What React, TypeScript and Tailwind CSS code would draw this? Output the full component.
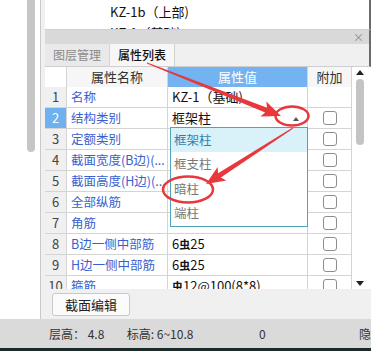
import React from "react";

type Row = { n: number; name: string; value: string; cb: boolean };

const rows: Row[] = [
  { n: 1, name: "名称", value: "KZ-1（基础)", cb: false },
  { n: 2, name: "结构类别", value: "框架柱", cb: true },
  { n: 3, name: "定额类别", value: "", cb: true },
  { n: 4, name: "截面宽度(B边)(...", value: "", cb: true },
  { n: 5, name: "截面高度(H边)(...", value: "", cb: true },
  { n: 6, name: "全部纵筋", value: "", cb: true },
  { n: 7, name: "角筋", value: "", cb: true },
  { n: 8, name: "B边一侧中部筋", value: "6|25", cb: true },
  { n: 9, name: "H边一侧中部筋", value: "6|25", cb: true },
  { n: 10, name: "箍筋", value: " |12@100(8*8)", cb: true },
];

function Val({ v }: { v: string }) {
  const parts = v.split("|");
  if (parts.length === 1) return <>{v}</>;
  return (
    <>
      {parts[0]}
      <span className="text-[11px] font-bold">虫</span>
      {parts[1]}
    </>
  );
}

function arrow(t: [number, number], p: [number, number], hl = 16, hw = 8, sw = 2.6, tw = 0.5) {
  const dx = p[0] - t[0];
  const dy = p[1] - t[1];
  const L = Math.hypot(dx, dy);
  const ux = dx / L;
  const uy = dy / L;
  const nx = -uy;
  const ny = ux;
  const bx = p[0] - hl * ux;
  const by = p[1] - hl * uy;
  const pts = [
    [t[0] + tw * nx, t[1] + tw * ny],
    [bx + sw * nx, by + sw * ny],
    [bx + hw * nx - 3 * ux, by + hw * ny - 3 * uy],
    [p[0], p[1]],
    [bx - hw * nx - 3 * ux, by - hw * ny - 3 * uy],
    [bx - sw * nx, by - sw * ny],
    [t[0] - tw * nx, t[1] - tw * ny],
  ];
  return pts.map((q) => q[0].toFixed(2) + "," + q[1].toFixed(2)).join(" ");
}

export default function App() {
  const font = { fontFamily: '"Noto Sans CJK SC", "Noto Sans", sans-serif' };
  return (
    <div
      className="relative w-[371px] h-[351px] overflow-hidden bg-white flex flex-col text-[12px] text-[#222]"
      style={font}
    >
      <div className="flex h-[319px]">
        {/* left area with scrollbar thumb */}
        <div className="w-[40px] bg-white pl-[27px]">
          <div className="w-[8px] h-[152px] bg-[#c6c6c6] rounded-b-full" />
        </div>
        {/* panel */}
        <div className="flex-1 flex flex-col border-l border-[#c9c9c9] bg-[#f0f0f0] pl-[4px]">
          {/* top white list */}
          <div className="h-[30px] bg-white border-b border-[#cfcfcf] overflow-hidden pl-[65px] pt-[1px] leading-[21px] text-[13px] text-[#111] border-r-2 border-r-[#6b6b6b]">
            <div>KZ-1b（上部)</div>
            <div>KZ-1（基础)</div>
          </div>
          {/* header bar */}
          <div className="h-[14px] bg-[#d9d9d9] flex items-center justify-end pr-[5px] text-[11px] leading-none text-[#8a8a8a] border-r-2 border-r-[#6b6b6b]">
            ×
          </div>
          {/* tabs */}
          <div className="h-[23px] flex border-b border-[#cfcfcf] bg-[#f0f0f0] border-r-2 border-r-[#6b6b6b]">
            <div className="w-[65px] flex items-center justify-center bg-[#e9e9e9] text-[#8a8a8a] text-[12px] border-r border-[#d6d6d6]">
              图层管理
            </div>
            <div className="w-[65px] flex items-center justify-center bg-[#f6f6f6] text-[#111] font-medium text-[12px] border-r border-[#d0d0d0]">
              属性列表
            </div>
          </div>
          {/* table */}
          <div className="h-[222px] flex overflow-hidden bg-white">
            <div className="w-[307px] flex flex-col">
              <div className="h-[20px] shrink-0 grid grid-cols-[22px_101px_140px_44px] border-b border-[#d4d4d4]">
                <div className="bg-white border-r border-[#d4d4d4]" />
                <div className="bg-[#f6f6f6] border-r border-[#d4d4d4] flex items-center justify-center text-[#333] text-[13px]">
                  属性名称
                </div>
                <div className="bg-[#73b3f1] border-r border-[#d4d4d4] flex items-center justify-center text-white text-[13px]">
                  属性值
                </div>
                <div className="bg-[#f6f6f6] border-r border-[#d4d4d4] flex items-center justify-center text-[#333] text-[13px]">
                  附加
                </div>
              </div>
              {rows.map((r) => (
                <div
                  key={r.n}
                  className="h-[21px] shrink-0 grid grid-cols-[22px_101px_140px_44px] border-b border-[#d4d4d4]"
                >
                  <div
                    className={
                      r.n === 2
                        ? "bg-[#6fb0ef] text-white border-r border-[#d4d4d4] flex items-center justify-center text-[13px]"
                        : "bg-[#f0f0f0] text-[#444] border-r border-[#d4d4d4] flex items-center justify-center text-[13px]"
                    }
                  >
                    {r.n}
                  </div>
                  <div className="border-r border-[#d4d4d4] flex items-center pl-[4px] text-[#3a5fcf] text-[12.5px] whitespace-nowrap overflow-hidden">
                    {r.name}
                  </div>
                  <div className="border-r border-[#d4d4d4] flex items-center pl-[4px] text-[#111] text-[13px] whitespace-pre overflow-hidden relative">
                    <Val v={r.value} />
                    {r.n === 2 && (
                      <div className="absolute right-[8px] top-[9px] w-0 h-0 border-l-[3px] border-r-[3px] border-b-[4px] border-l-transparent border-r-transparent border-b-[#555]" />
                    )}
                  </div>
                  <div className="border-r border-[#d4d4d4] flex items-center justify-center">
                    {r.cb && <div className="w-[14px] h-[14px] border border-[#8d8d8d] rounded-[3px] bg-white" />}
                  </div>
                </div>
              ))}
            </div>
            {/* vertical scrollbar */}
            <div className="w-[16px] flex flex-col items-center bg-white">
              <div className="mt-[3px] w-0 h-0 border-l-[4px] border-r-[4px] border-b-[5px] border-l-transparent border-r-transparent border-b-[#222]" />
              <div className="mt-[4px] w-[8px] h-[66px] rounded-full bg-[#c4c4c4]" />
              <div className="mt-auto mb-[3px] w-0 h-0 border-l-[4px] border-r-[4px] border-t-[5px] border-l-transparent border-r-transparent border-t-[#222]" />
            </div>
          </div>
          {/* button area */}
          <div className="flex-1 pl-[7px] pt-[4px] bg-[#f0f0f0]">
            <div className="w-[78px] h-[23px] bg-[#fbfbfb] border border-[#c8c8c8] rounded-[3px] flex items-center justify-center text-[13px] text-[#222]">
              截面编辑
            </div>
          </div>
        </div>
      </div>
      {/* status bar */}
      <div className="h-[29px] bg-[#dadada] flex items-center pl-[49px] text-[12px] text-[#333] whitespace-nowrap">
        <span className="w-[80px]">层高： 4.8</span>
        <span className="w-[136px]">标高: 6~10.8</span>
        <span className="w-[103px]">0</span>
        <span>隐</span>
      </div>
      <div className="h-[3px] bg-[#1c2a2a]" />

      {/* dropdown list */}
      <div className="absolute left-[170px] top-[127px] w-[138px] h-[100px] bg-white border border-[#4ea5b8] flex flex-col text-[12.5px]">
        <div className="h-[24px] flex items-center pl-[3px] bg-[#d9f1f9] text-[#2f7fb0]">框架柱</div>
        <div className="h-[25px] flex items-center pl-[3px] text-[#777]">框支柱</div>
        <div className="h-[25px] flex items-center pl-[3px] text-[#777]">暗柱</div>
        <div className="h-[25px] flex items-center pl-[3px] text-[#777]">端柱</div>
      </div>

      {/* red annotations */}
      <svg className="absolute left-0 top-0 pointer-events-none" width="371" height="351" viewBox="0 0 371 351">
        <polygon points={arrow([147, 63], [281, 116])} fill="#e8383d" />
        <ellipse cx="292" cy="116" rx="16.5" ry="9.5" fill="none" stroke="#e8383d" strokeWidth="2.5" />
        <polygon points={arrow([293, 128], [206, 184])} fill="#e8383d" />
        <ellipse cx="188" cy="189.5" rx="25" ry="13" fill="none" stroke="#e8383d" strokeWidth="2.5" />
      </svg>
    </div>
  );
}
